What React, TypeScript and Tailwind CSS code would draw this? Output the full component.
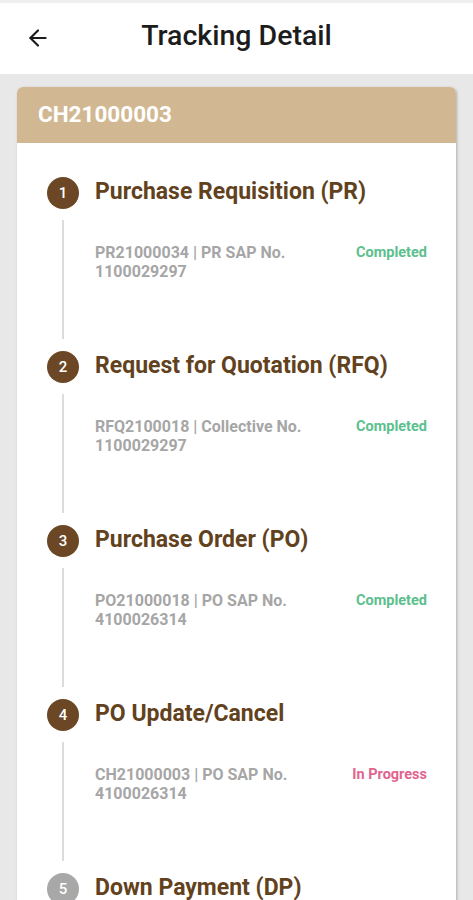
import { ArrowLeft } from "lucide-react";

type Step = {
  no: number;
  title: string;
  ref: string;
  sap: string;
  status?: string;
  done?: boolean;
  active: boolean;
};

const steps: Step[] = [
  { no: 1, title: "Purchase Requisition (PR)", ref: "PR21000034 | PR SAP No.", sap: "1100029297", status: "Completed", done: true, active: true },
  { no: 2, title: "Request for Quotation (RFQ)", ref: "RFQ2100018 | Collective No.", sap: "1100029297", status: "Completed", done: true, active: true },
  { no: 3, title: "Purchase Order (PO)", ref: "PO21000018 | PO SAP No.", sap: "4100026314", status: "Completed", done: true, active: true },
  { no: 4, title: "PO Update/Cancel", ref: "CH21000003 | PO SAP No.", sap: "4100026314", status: "In Progress", done: false, active: true },
  { no: 5, title: "Down Payment (DP)", ref: "", sap: "", active: false },
];

function StepRow({ step }: { step: Step }) {
  return (
    <div className="flex">
      <div className="flex w-[32px] flex-col items-center">
        <div
          className={
            step.active
              ? "flex h-[32px] w-[32px] items-center justify-center rounded-full bg-[#6b4726] text-[15px] font-medium text-white"
              : "flex h-[32px] w-[32px] items-center justify-center rounded-full bg-[#a8a8a8] text-[15px] font-medium text-white"
          }
        >
          {step.no}
        </div>
        <div className="mt-[11px] mb-[12px] h-[119px] w-[2px] bg-[#dcdcdc]" />
      </div>
      <div className="ml-[16px] flex-1 pr-[29px]">
        <div className="flex h-[30px] items-center text-[23px] font-bold text-[#62421d]">
          {step.title}
        </div>
        {step.ref && (
          <div className="mt-[36px] flex justify-between">
            <div className="text-[16px] font-bold leading-[19px] text-[#a6a6a6]">
              <div>{step.ref}</div>
              <div>{step.sap}</div>
            </div>
            <div
              className={
                step.done
                  ? "text-[14.5px] font-bold leading-[19px] text-[#5cc08e]"
                  : "text-[14.5px] font-bold leading-[19px] text-[#e0648f]"
              }
            >
              {step.status}
            </div>
          </div>
        )}
      </div>
    </div>
  );
}

export default function App() {
  return (
    <div className="h-[900px] overflow-hidden bg-[#e8e8e8] font-['Roboto',sans-serif]">
      <div className="h-[3px] bg-[#efefef]" />
      <div className="relative flex h-[71px] items-center justify-center bg-white">
        <ArrowLeft className="absolute left-[25px] top-[22px] h-[26px] w-[26px] text-[#1c1c1c]" strokeWidth={2} />
        <div className="-mt-[4px] text-[28.5px] font-medium text-[#1c1c1c]">Tracking Detail</div>
      </div>
      <div className="px-[17px] pt-[13px]">
        <div className="overflow-hidden rounded-[6px] bg-white shadow-[1px_1px_3px_rgba(0,0,0,0.25)]">
          <div className="flex h-[56px] items-center bg-[#d1b893] px-[21px] text-[22.5px] font-bold text-white">
            CH21000003
          </div>
          <div className="pl-[30px] pt-[34px]">
            {steps.map((s) => (
              <StepRow key={s.no} step={s} />
            ))}
          </div>
        </div>
      </div>
    </div>
  );
}
